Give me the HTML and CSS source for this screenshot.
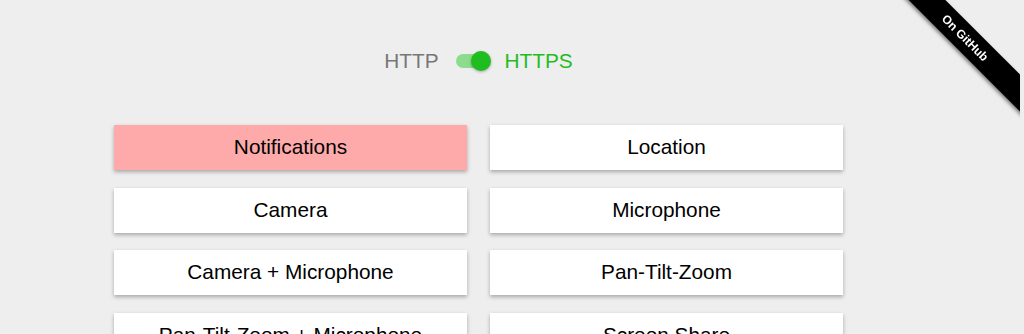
FILE: index.html
```html
<!DOCTYPE html>
<html lang="en">
<head>
  <meta charset="UTF-8" />
  <meta name="viewport" content="width=device-width, initial-scale=1.0"/>
  <title>Permission Site</title>
  <link rel="stylesheet" href="styles.css">
</head>
<body>

  <div class="ribbon-wrap">
    <a href="#" class="ribbon">On GitHub</a>
  </div>

  <div class="content">

    <div class="protocol">
      <span class="protocol-label">HTTP</span>
      <span class="switch">
        <span class="switch-track"></span>
        <span class="switch-knob"></span>
      </span>
      <span class="protocol-label on">HTTPS</span>
    </div>

    <div class="permissions">
      <button class="permission denied">Notifications</button>
      <button class="permission">Location</button>
      <button class="permission">Camera</button>
      <button class="permission">Microphone</button>
      <button class="permission">Camera + Microphone</button>
      <button class="permission">Pan-Tilt-Zoom</button>
      <button class="permission">Pan-Tilt-Zoom + Microphone</button>
      <button class="permission">Screen Share</button>
      <button class="permission">Clipboard</button>
      <button class="permission">Fullscreen</button>
    </div>

  </div>

</body>
</html>
```

FILE: styles.css
```css
body {
  margin: 0;
  font-family: "Liberation Sans", Arial, sans-serif;
  background-color: #eeeeee;
}

.content {
  width: 729px;
  margin-left: 114px;
}

.protocol {
  display: flex;
  justify-content: center;
  align-items: center;
  height: 28px;
  margin-top: 47px;
}

.protocol-label {
  font-size: 20.8px;
  color: #777;
}

.protocol-label.on {
  color: #1fbd1f;
}

.switch {
  position: relative;
  width: 34px;
  height: 20px;
  margin: 0 15px 0 17px;
}

.switch-track {
  position: absolute;
  left: 0;
  top: 3px;
  width: 34px;
  height: 14px;
  border-radius: 7px;
  background-color: #8ddc8d;
}

.switch-knob {
  position: absolute;
  right: -1px;
  top: 0;
  width: 20px;
  height: 20px;
  border-radius: 50%;
  background-color: #1fbd1f;
  box-shadow: 0 1px 3px rgba(0, 0, 0, 0.3);
}

.permissions {
  display: grid;
  grid-template-columns: 353px 353px;
  column-gap: 23px;
  row-gap: 17.5px;
  margin-top: 50px;
}

.permission {
  height: 45px;
  border: none;
  padding: 0 0 1px;
  font-family: inherit;
  font-size: 20.8px;
  color: #000;
  background-color: #fff;
  box-shadow: 0 2px 4px rgba(0, 0, 0, 0.3);
  cursor: pointer;
}

.permission.denied {
  background-color: #ffaaaa;
}

.ribbon-wrap {
  position: fixed;
  top: 0;
  right: 4px;
  width: 150px;
  height: 150px;
  overflow: hidden;
}

.ribbon {
  position: absolute;
  left: -5px;
  top: 25px;
  width: 200px;
  height: 26px;
  line-height: 26px;
  text-align: center;
  background-color: #000;
  color: #fff;
  font-size: 12px;
  font-weight: bold;
  text-decoration: none;
  transform: rotate(45deg);
  box-shadow: 0 2px 4px rgba(0, 0, 0, 0.5);
}
```
